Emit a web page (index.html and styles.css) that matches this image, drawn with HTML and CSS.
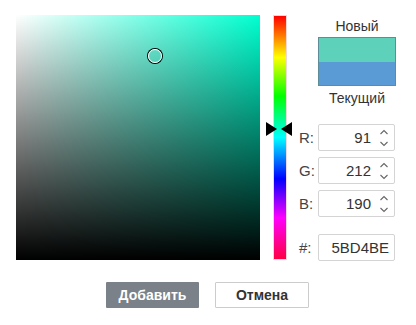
FILE: index.html
```html
<!DOCTYPE html>
<html lang="ru">
<head>
    <meta charset="UTF-8">
    <meta name="viewport" content="width=device-width, initial-scale=1.0">
    <title>Выбор цвета</title>
    <link rel="stylesheet" href="styles.css">
</head>
<body>

    <div class="dialog">
        <div class="picker">
            <!-- Saturation / value square -->
            <div class="sv">
                <span class="sv-cursor"></span>
            </div>

            <!-- Hue bar -->
            <div class="hue">
                <svg class="hue-arrows" width="28" height="16" viewBox="0 0 28 16">
                    <polygon points="1,1 12,8 1,15" fill="#000"/>
                    <polygon points="27,1 16,8 27,15" fill="#000"/>
                </svg>
            </div>

            <!-- Preview and values -->
            <div class="side">
                <div class="preview">
                    <div class="caption caption-new">Новый</div>
                    <div class="swatch">
                        <div class="swatch-new"></div>
                        <div class="swatch-old"></div>
                    </div>
                    <div class="caption caption-old">Текущий</div>
                </div>

                <div class="row row-r">
                    <label>R:</label>
                    <div class="field">
                        <input type="text" value="91">
                        <svg class="spin" width="10" height="20" viewBox="0 0 10 20">
                            <polyline points="1.5,6 5,2.5 8.5,6" fill="none" stroke="#666" stroke-width="1.1"/>
                            <polyline points="1.5,14 5,17.5 8.5,14" fill="none" stroke="#666" stroke-width="1.1"/>
                        </svg>
                    </div>
                </div>
                <div class="row">
                    <label>G:</label>
                    <div class="field">
                        <input type="text" value="212">
                        <svg class="spin" width="10" height="20" viewBox="0 0 10 20">
                            <polyline points="1.5,6 5,2.5 8.5,6" fill="none" stroke="#666" stroke-width="1.1"/>
                            <polyline points="1.5,14 5,17.5 8.5,14" fill="none" stroke="#666" stroke-width="1.1"/>
                        </svg>
                    </div>
                </div>
                <div class="row">
                    <label>B:</label>
                    <div class="field">
                        <input type="text" value="190">
                        <svg class="spin" width="10" height="20" viewBox="0 0 10 20">
                            <polyline points="1.5,6 5,2.5 8.5,6" fill="none" stroke="#666" stroke-width="1.1"/>
                            <polyline points="1.5,14 5,17.5 8.5,14" fill="none" stroke="#666" stroke-width="1.1"/>
                        </svg>
                    </div>
                </div>
                <div class="row row-hex">
                    <label>#:</label>
                    <div class="field">
                        <input type="text" class="hex" value="5BD4BE">
                    </div>
                </div>
            </div>
        </div>

        <!-- Buttons -->
        <div class="buttons">
            <button class="btn btn-add">Добавить</button>
            <button class="btn btn-cancel">Отмена</button>
        </div>
    </div>

</body>
</html>
```

FILE: styles.css
```css
body {
    margin: 0;
    padding: 0;
    background: #fff;
    font-family: "Liberation Sans", Arial, sans-serif;
    color: #333;
}

.dialog {
    width: 416px;
    padding-top: 15px;
}

/* Picker area */
.picker {
    display: flex;
    padding-left: 16px;
}

.sv {
    position: relative;
    width: 244px;
    height: 245px;
    background:
        linear-gradient(to top, #000, rgba(0, 0, 0, 0)),
        linear-gradient(to right, #fff, hsl(169, 100%, 50%));
}

.sv-cursor {
    position: absolute;
    left: 132px;
    top: 34px;
    width: 12px;
    height: 12px;
    border: 1.5px solid #fff;
    border-radius: 50%;
    box-shadow: 0 0 0 1px #000;
}

.hue {
    position: relative;
    margin-left: 13px;
    width: 12px;
    height: 243px;
    border: 1px solid #f0d8d8;
    background: linear-gradient(to bottom, #f00, #ff0 17%, #0f0 33%, #0ff 50%, #00f 67%, #f0f 83%, #f04);
}

.hue-arrows {
    position: absolute;
    left: -9px;
    top: 105px;
}

/* Right column */
.side {
    margin-left: 12px;
    width: 100px;
}

.preview {
    margin-left: 19px;
    width: 78px;
    text-align: center;
    font-size: 14px;
}

.caption-new {
    line-height: 22px;
}

.caption-old {
    margin-top: 2px;
    line-height: 20px;
}

.swatch {
    border: 1px solid #5f8c99;
}

.swatch-new {
    height: 24px;
    background: #5ed1bb;
}

.swatch-old {
    height: 23px;
    background: #5b9bd5;
}

.row {
    display: flex;
    align-items: center;
    height: 27px;
    margin-top: 6px;
}

.row-r {
    margin-top: 16px;
}

.row-hex {
    margin-top: 17px;
}

.row label {
    width: 19px;
    font-size: 15px;
    color: #444;
}

.field {
    display: flex;
    align-items: center;
    box-sizing: border-box;
    width: 77px;
    height: 27px;
    border: 1px solid #d4d4d4;
    border-radius: 2px;
    background: #fff;
}

.field input {
    width: 52px;
    padding: 0;
    margin: 0;
    border: none;
    outline: none;
    text-align: right;
    font-family: "Liberation Sans", Arial, sans-serif;
    font-size: 15px;
    color: #333;
    background: transparent;
}

.spin {
    margin-left: 8px;
}

.field input.hex {
    width: 70px;
}

/* Buttons */
.buttons {
    display: flex;
    justify-content: center;
    gap: 16px;
    margin-top: 21px;
    padding-right: 1px;
}

.btn {
    box-sizing: border-box;
    height: 26px;
    font-family: "Liberation Sans", Arial, sans-serif;
    font-size: 14px;
    font-weight: bold;
    border-radius: 1px;
    cursor: pointer;
}

.btn-add {
    width: 93px;
    background: #7a8188;
    color: #fff;
    border: none;
}

.btn-cancel {
    width: 94px;
    background: #fff;
    color: #333;
    border: 1px solid #ccc;
}
```
